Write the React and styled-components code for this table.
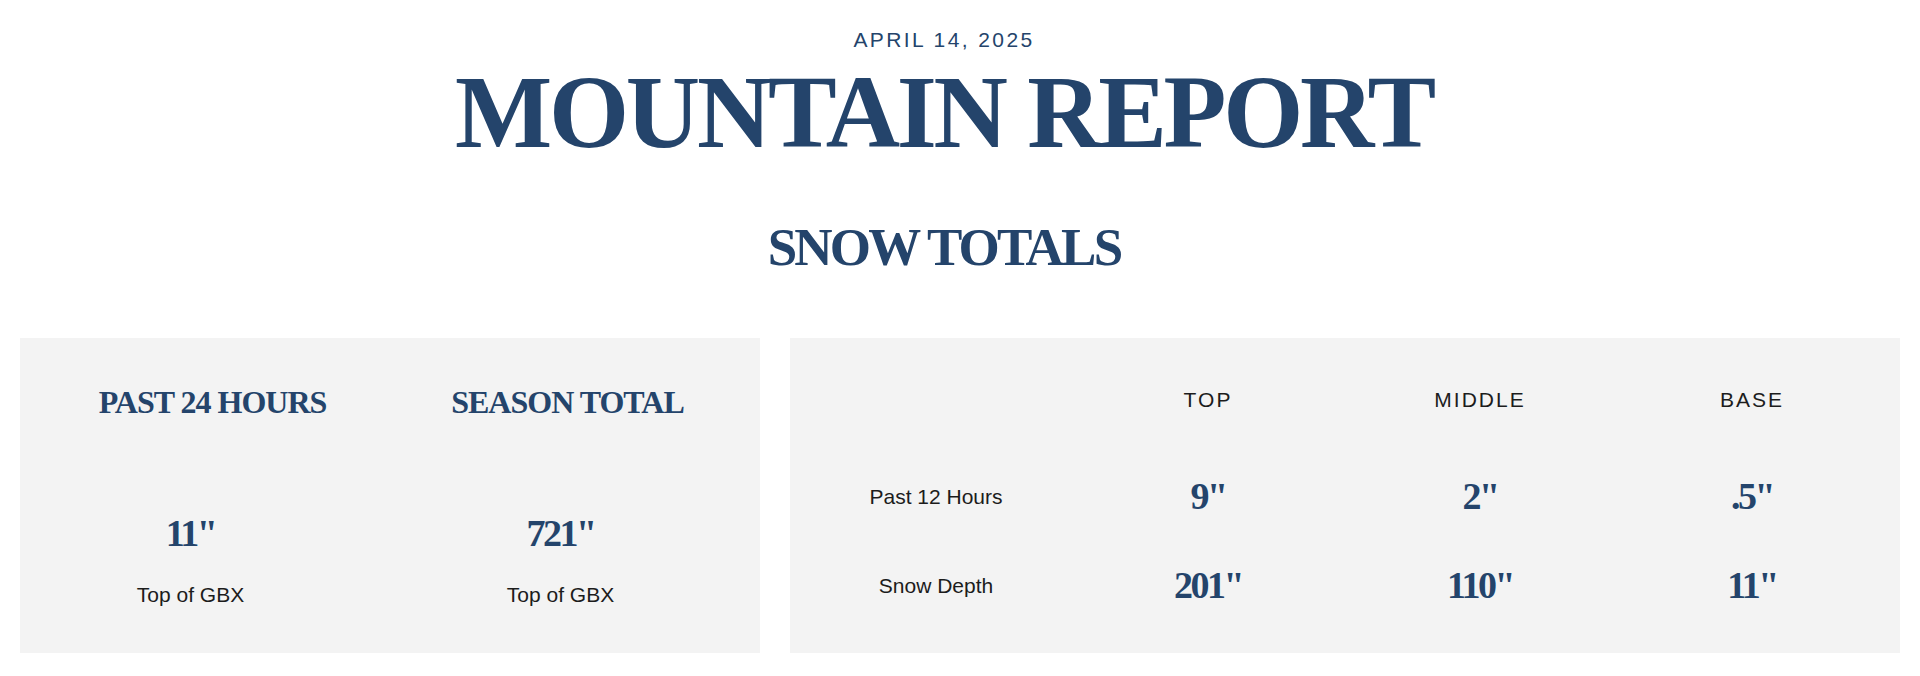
import React from "react";
import styled, { createGlobalStyle } from "styled-components";

const navy = "#24446b";
const ink = "#1c1c1c";
const serif = `"Liberation Serif", "DejaVu Serif", serif`;
const sans = `"Liberation Sans", Arial, sans-serif`;

const GlobalStyle = createGlobalStyle`
  html, body {
    margin: 0;
    padding: 0;
    background: #ffffff;
  }
  * {
    box-sizing: border-box;
  }
`;

const summary = [
  { title: "PAST 24 HOURS", value: "11\"", note: "Top of GBX" },
  { title: "SEASON TOTAL", value: "721\"", note: "Top of GBX" },
];

const zones = ["TOP", "MIDDLE", "BASE"];

const rows = [
  { label: "Past 12 Hours", values: ["9\"", "2\"", ".5\""], gap: 67 },
  { label: "Snow Depth", values: ["201\"", "110\"", "11\""], gap: 51 },
];

const App = () => {
  return (
    <>
      <GlobalStyle />
      <Page>
        <Header>
          <DateLine>APRIL 14, 2025</DateLine>
          <Title>MOUNTAIN REPORT</Title>
          <Subtitle>SNOW TOTALS</Subtitle>
        </Header>

        <Panels>
          {/* 24h / season */}
          <Panel>
            <HeadGrid>
              {summary.map((s) => (
                <StatTitle key={s.title}>{s.title}</StatTitle>
              ))}
            </HeadGrid>
            <StatGrid>
              {summary.map((s) => (
                <Stat key={s.title}>
                  <Value>{s.value}</Value>
                  <Note>{s.note}</Note>
                </Stat>
              ))}
            </StatGrid>
          </Panel>

          {/* by elevation */}
          <Panel $top={51}>
            <Row>
              <span />
              {zones.map((z) => (
                <ZoneHead key={z}>{z}</ZoneHead>
              ))}
            </Row>
            {rows.map((r) => (
              <Row key={r.label} $gap={r.gap}>
                <RowLabel>{r.label}</RowLabel>
                {r.values.map((v, i) => (
                  <Value key={i}>{v}</Value>
                ))}
              </Row>
            ))}
          </Panel>
        </Panels>
      </Page>
    </>
  );
};

export default App;

const Page = styled.div`
  width: 1920px;
  padding: 29px 20px 23px;
  display: flex;
  flex-direction: column;
`;

const Header = styled.header`
  display: flex;
  flex-direction: column;
  align-items: center;
  padding-right: 32px;
`;

const DateLine = styled.div`
  font-family: ${sans};
  font-size: 21px;
  line-height: 1;
  letter-spacing: 2.4px;
  color: ${navy};
`;

const Title = styled.h1`
  margin: 11px 0 0;
  font-family: ${serif};
  font-weight: 700;
  font-size: 103px;
  line-height: 1;
  letter-spacing: -3.3px;
  color: ${navy};
`;

const Subtitle = styled.h2`
  margin: 57px 0 0;
  font-family: ${serif};
  font-weight: 700;
  font-size: 53px;
  line-height: 1;
  letter-spacing: -2.8px;
  color: ${navy};
`;

const Panels = styled.div`
  margin-top: 64px;
  width: 100%;
  display: grid;
  grid-template-columns: 2fr 3fr;
  gap: 30px;
`;

const Panel = styled.section`
  background: #f3f3f3;
  height: 315px;
  padding-top: ${(p) => p.$top || 48}px;
`;

const HeadGrid = styled.div`
  display: grid;
  grid-template-columns: 1fr 1fr;
  padding: 0 15px;
`;

const StatTitle = styled.h3`
  margin: 0;
  text-align: center;
  font-family: ${serif};
  font-weight: 700;
  font-size: 32px;
  line-height: 1;
  letter-spacing: -1px;
  color: ${navy};
`;

const StatGrid = styled.div`
  margin-top: 96px;
  display: grid;
  grid-template-columns: 1fr 1fr;
`;

const Stat = styled.div`
  display: flex;
  flex-direction: column;
  align-items: center;
  gap: 32px;
  padding-right: 29px;
`;

const Value = styled.div`
  text-align: center;
  font-family: ${serif};
  font-weight: 700;
  font-size: 38px;
  line-height: 1;
  letter-spacing: -2.5px;
  color: ${navy};
`;

const Note = styled.div`
  font-family: ${sans};
  font-size: 21px;
  line-height: 1;
  color: ${ink};
`;

const Row = styled.div`
  display: grid;
  grid-template-columns: repeat(4, 1fr);
  align-items: center;
  padding: 0 12px 0 10px;
  margin-top: ${(p) => p.$gap || 0}px;
`;

const ZoneHead = styled.div`
  text-align: center;
  font-family: ${sans};
  font-size: 21px;
  line-height: 1;
  letter-spacing: 2px;
  color: ${ink};
`;

const RowLabel = styled.div`
  text-align: center;
  font-family: ${sans};
  font-size: 21px;
  line-height: 1;
  color: ${ink};
`;
